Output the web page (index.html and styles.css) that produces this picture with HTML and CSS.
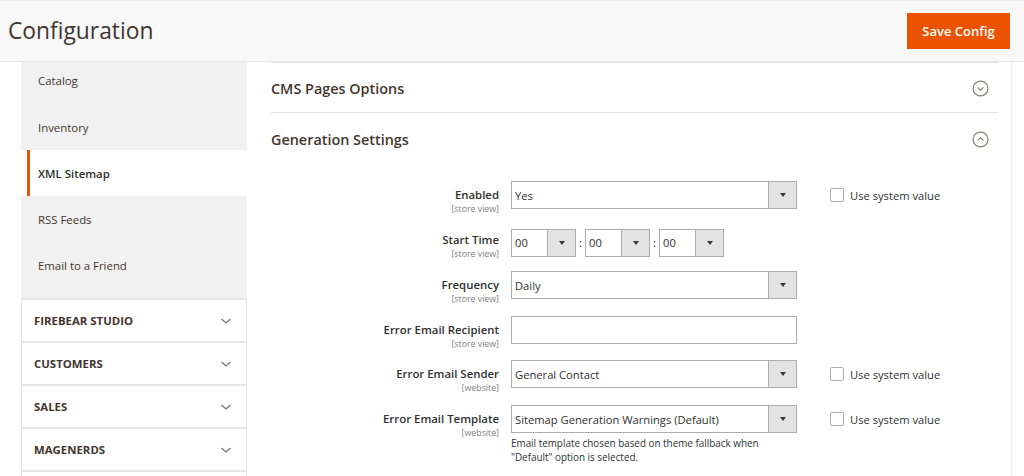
FILE: index.html
```html
<!DOCTYPE html>
<html>
<head>
<meta charset="utf-8">
<link rel="stylesheet" href="styles.css">
</head>
<body>
<header class="page-header">
  <h1 class="page-title">Configuration</h1>
  <button class="btn-primary">Save Config</button>
</header>
<div class="page-body">
  <aside class="nav">
    <div class="nav-sub">
      <div class="nav-item first">Catalog</div>
      <div class="nav-item">Inventory</div>
      <div class="nav-item active">XML Sitemap</div>
      <div class="nav-item">RSS Feeds</div>
      <div class="nav-item">Email to a Friend</div>
    </div>
    <div class="nav-group"><span>FIREBEAR STUDIO</span><svg class="chev" viewBox="0 0 12 8"><polyline points="1.5,2 6,6 10.5,2"/></svg></div>
    <div class="nav-group"><span>CUSTOMERS</span><svg class="chev" viewBox="0 0 12 8"><polyline points="1.5,2 6,6 10.5,2"/></svg></div>
    <div class="nav-group"><span>SALES</span><svg class="chev" viewBox="0 0 12 8"><polyline points="1.5,2 6,6 10.5,2"/></svg></div>
    <div class="nav-group"><span>MAGENERDS</span><svg class="chev" viewBox="0 0 12 8"><polyline points="1.5,2 6,6 10.5,2"/></svg></div>
    <div class="nav-group"><span></span></div>
  </aside>
  <main class="content">
    <div class="fs-head top">
      <span>CMS Pages Options</span>
      <svg class="circ" viewBox="0 0 16 16"><circle cx="8" cy="8" r="7"/><polyline points="5.2,7 8,9.6 10.8,7"/></svg>
    </div>
    <div class="fs-head">
      <span>Generation Settings</span>
      <svg class="circ" viewBox="0 0 16 16"><circle cx="8" cy="8" r="7"/><polyline points="5.2,9 8,6.4 10.8,9"/></svg>
    </div>
    <div class="form">
      <div class="row">
        <div class="label"><div class="lbl">Enabled</div><div class="scope">[store view]</div></div>
        <div class="control"><div class="select"><span class="val">Yes</span><span class="arrow"></span></div></div>
        <label class="usedef"><span class="cb"></span>Use system value</label>
      </div>
      <div class="row">
        <div class="label"><div class="lbl">Start Time</div><div class="scope">[store view]</div></div>
        <div class="control time">
          <div class="select small"><span class="val">00</span><span class="arrow"></span></div>
          <span class="colon">:</span>
          <div class="select small"><span class="val">00</span><span class="arrow"></span></div>
          <span class="colon">:</span>
          <div class="select small"><span class="val">00</span><span class="arrow"></span></div>
        </div>
        <div></div>
      </div>
      <div class="row">
        <div class="label"><div class="lbl">Frequency</div><div class="scope">[store view]</div></div>
        <div class="control"><div class="select"><span class="val">Daily</span><span class="arrow"></span></div></div>
        <div></div>
      </div>
      <div class="row">
        <div class="label"><div class="lbl">Error Email Recipient</div><div class="scope">[store view]</div></div>
        <div class="control"><div class="input"></div></div>
        <div></div>
      </div>
      <div class="row">
        <div class="label"><div class="lbl">Error Email Sender</div><div class="scope">[website]</div></div>
        <div class="control"><div class="select"><span class="val">General Contact</span><span class="arrow"></span></div></div>
        <label class="usedef"><span class="cb"></span>Use system value</label>
      </div>
      <div class="row">
        <div class="label"><div class="lbl">Error Email Template</div><div class="scope">[website]</div></div>
        <div class="control">
          <div class="select"><span class="val">Sitemap Generation Warnings (Default)</span><span class="arrow"></span></div>
          <div class="note">Email template chosen based on theme fallback when "Default" option is selected.</div>
        </div>
        <label class="usedef"><span class="cb"></span>Use system value</label>
      </div>
    </div>
  </main>
  <div class="edge"></div>
</div>
</body>
</html>
```
FILE: styles.css
```css
* { box-sizing: border-box; }
html, body { margin: 0; padding: 0; }
body {
  font-family: "Open Sans", "Liberation Sans", sans-serif;
  color: #303030;
  background: #fff;
  width: 1024px;
  height: 476px;
  overflow: hidden;
}
.page-header {
  height: 62px;
  background: #f8f8f8;
  border-top: 1px solid #ececec;
  border-bottom: 1px solid #e6e6e6;
  display: flex;
  align-items: center;
  justify-content: space-between;
  padding: 0 14px 0 8px;
}
.page-title {
  margin: 0;
  font-weight: 400;
  font-size: 22.8px;
  color: #41362f;
  position: relative;
  top: -1px;
}
.btn-primary {
  font-family: inherit;
  background: #eb5202;
  border: 1px solid #eb5202;
  color: #fff;
  font-weight: 600;
  font-size: 13px;
  height: 36px;
  width: 103px;
  padding: 0;
}
.page-body {
  display: flex;
  padding-left: 21px;
}
.nav {
  width: 226px;
  flex: none;
}
.nav-sub {
  background: #f1f1f1;
  padding-bottom: 10px;
}
.nav-item {
  height: 46px;
  display: flex;
  align-items: center;
  padding-left: 17px;
  font-size: 11.4px;
  color: #41362f;
}
.nav-item.first {
  height: 42px;
  padding-bottom: 5px;
}
.nav-item.active {
  background: linear-gradient(to right, #fff 6px, #eb5202 6px, #eb5202 9px, #fff 9px);
  font-weight: 600;
  color: #303030;
}
.nav-group {
  height: 43px;
  border: 1px solid #e6e6e6;
  border-top: 0;
  border-bottom-width: 2px;
  display: flex;
  align-items: center;
  justify-content: space-between;
  padding: 0 14px 0 12px;
  font-size: 11.4px;
  font-weight: 700;
  color: #41362f;
  background: #fff;
}
.nav-sub + .nav-group { border-top: 2px solid #e6e6e6; height: 45px; }
.chev {
  width: 12px;
  height: 8px;
  fill: none;
  stroke: #777;
  stroke-width: 1.3;
}
.content {
  width: 727px;
  margin-left: 24px;
  flex: none;
}
.fs-head {
  height: 51px;
  border-bottom: 1px solid #e3e3e3;
  display: flex;
  align-items: center;
  justify-content: space-between;
  padding-right: 9px;
  padding-top: 2px;
  font-size: 14.4px;
  font-weight: 600;
  color: #41362f;
}
.fs-head.top {
  border-top: 1px solid #dcdcdc;
}
.fs-head + .fs-head { border-bottom: 0; height: 50px; }
.circ {
  width: 17px;
  height: 17px;
  fill: none;
  stroke: #8c8580;
  stroke-width: 1.1;
}
.form {
  padding-top: 18px;
}
.row {
  display: grid;
  grid-template-columns: 228px 286px 1fr;
  column-gap: 12px;
  margin-bottom: 12px;
}
.row:nth-child(4) { margin-bottom: 11px; }
.label {
  text-align: right;
  padding-top: 7px;
}
.lbl {
  font-size: 11.4px;
  font-weight: 600;
  line-height: 14px;
  color: #303030;
}
.scope {
  font-size: 8.8px;
  line-height: 10px;
  margin-top: 2px;
  color: #808080;
}
.select, .input {
  height: 28px;
  border: 1px solid #adadad;
  background: #fff;
  display: flex;
  align-items: stretch;
}
.select .val {
  flex: 1;
  padding-left: 3px;
  font-size: 11.2px;
  display: flex;
  align-items: center;
  white-space: nowrap;
  overflow: hidden;
}
.select .arrow {
  width: 28px;
  flex: none;
  background: #e3e3e3;
  border-left: 1px solid #adadad;
  display: flex;
  align-items: center;
  justify-content: center;
}
.select .arrow::after {
  content: "";
  border-left: 3px solid transparent;
  border-right: 3px solid transparent;
  border-top: 4px solid #41362f;
}
.control.time {
  display: flex;
  align-items: center;
}
.select.small { width: 65px; }
.colon {
  width: 9px;
  text-align: center;
  font-size: 11.2px;
}
.note {
  margin-top: 3px;
  font-size: 9.9px;
  line-height: 14px;
  color: #303030;
  max-width: 270px;
}
.usedef {
  padding-left: 21px;
  height: 28px;
  display: flex;
  align-items: center;
  font-size: 11.2px;
  color: #303030;
}
.cb {
  width: 14px;
  height: 14px;
  border: 1px solid #adadad;
  border-radius: 2px;
  background: #fff;
  margin-right: 6px;
}
.edge {
  margin-left: 13px;
  width: 1px;
  height: 414px;
  background: #efefef;
}
```
